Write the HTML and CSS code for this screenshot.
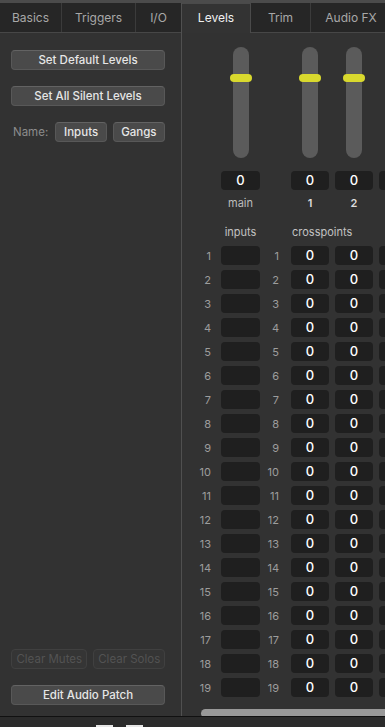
FILE: index.html
```html
<!DOCTYPE html>
<html lang="en">
<head>
    <meta charset="UTF-8">
    <meta name="viewport" content="width=device-width, initial-scale=1.0">
    <title>Levels</title>
    <link rel="stylesheet" href="styles.css">
</head>
<body>
    <div class="topline"></div>
    <div class="window">
        <div class="left">
            <div class="tabs">
                <div class="tab t-basics">Basics</div>
                <div class="tab t-triggers">Triggers</div>
                <div class="tab t-io">I/O</div>
            </div>
            <div class="left-body">
                <div class="btn wide">Set Default Levels</div>
                <div class="btn wide gap">Set All Silent Levels</div>
                <div class="name-row">
                    <span class="name-label">Name:</span>
                    <div class="btn b-inputs">Inputs</div>
                    <div class="btn b-gangs">Gangs</div>
                </div>
                <div class="spacer"></div>
                <div class="clear-row">
                    <div class="btn disabled b-mutes">Clear Mutes</div>
                    <div class="btn disabled b-solos">Clear Solos</div>
                </div>
                <div class="btn wide gap">Edit Audio Patch</div>
            </div>
        </div>
        <div class="right">
            <div class="tabs">
                <div class="tab selected t-levels">Levels</div>
                <div class="tab t-trim">Trim</div>
                <div class="tab t-fx">Audio FX</div>
            </div>
            <div class="row faders">
                <div class="num"></div>
                <div class="col in">
                    <div class="fader"><div class="thumb"></div></div>
                    <div class="val">0</div>
                    <div class="chlabel">main</div>
                </div>
                <div class="num2"></div>
                <div class="col xp">
                    <div class="fader"><div class="thumb"></div></div>
                    <div class="val">0</div>
                    <div class="chlabel bright">1</div>
                </div>
                <div class="col xp">
                    <div class="fader"><div class="thumb"></div></div>
                    <div class="val">0</div>
                    <div class="chlabel bright">2</div>
                </div>
                <div class="col xp">
                    <div class="fader"><div class="thumb"></div></div>
                    <div class="val"></div>
                </div>
            </div>
            <div class="row heads">
                <div class="num"></div>
                <div class="head in">inputs</div>
                <div class="num2"></div>
                <div class="head xhead">crosspoints</div>
            </div>
            <div id="rows" class="rows"></div>
            <div class="hscroll"></div>
        </div>
    </div>
    <div class="footer">
        <div class="sq"></div>
        <div class="sq"></div>
    </div>

    <script>
        let rows = document.getElementById('rows');
        for (let i = 1; i <= 19; i++) {
            rows.innerHTML += `<div class="row">
                <div class="num">${i}</div>
                <div class="box in"></div>
                <div class="num2">${i}</div>
                <div class="box xp">0</div>
                <div class="box xp">0</div>
                <div class="box xp"></div>
            </div>`;
        }
    </script>
</body>
</html>
```

FILE: styles.css
```css
body { margin: 0; width: 385px; height: 727px; overflow: hidden; background: #323232; font-family: Inter, "Liberation Sans", sans-serif; color: #e2e2e2; }
.topline { height: 3px; background: #4b4b4b; }
.window { display: flex; height: 713px; }

.tabs { display: flex; height: 29px; background: #262626; border-bottom: 1px solid #474747; flex-shrink: 0; }
.tab { height: 29px; line-height: 29px; text-align: center; font-size: 12px; color: #a8a8a8; border-right: 1px solid #3b3b3b; flex-shrink: 0; }
.tab.selected { background: #333; color: #f0f0f0; border-right-color: #4a4a4a; height: 30px; box-shadow: inset 0 1px 0 #4a4a4a; }
.t-basics { width: 61px; }
.t-triggers { width: 73px; }
.t-io { flex: 1; border-right: none; }
.t-levels { width: 68px; }
.t-trim { width: 59px; }
.t-fx { width: 80px; }

.left { width: 181px; border-right: 1px solid #505050; display: flex; flex-direction: column; flex-shrink: 0; }
.left-body { flex: 1; display: flex; flex-direction: column; padding: 17px 16px 11px 11px; }
.btn { box-sizing: border-box; height: 20px; line-height: 18px; text-align: center; font-size: 11.5px; font-weight: 500; background: #4a4a4a; border: 1px solid #585858; border-top-color: #636363; border-radius: 4px; color: #e6e6e6; }
.wide { width: 154px; }
.gap { margin-top: 16px; }
.name-row { display: flex; align-items: center; gap: 6px; margin-top: 16px; }
.name-label { font-size: 11.5px; color: #8c8c8c; margin-left: 2px; width: 37px; }
.b-inputs { width: 52px; }
.b-gangs { width: 53px; }
.spacer { flex: 1; }
.clear-row { display: flex; gap: 6px; }
.btn.disabled { background: #353535; border-color: #404040; color: #535353; font-weight: 400; }
.b-mutes { width: 77px; }
.b-solos { width: 72px; }

.right { flex: 1; overflow: hidden; display: flex; flex-direction: column; }
.row { display: flex; align-items: center; padding-left: 8px; flex-shrink: 0; }
.num { width: 21px; margin-right: 10px; text-align: right; font-size: 11px; color: #9d9d9d; flex-shrink: 0; }
.num2 { width: 19px; margin-right: 12px; text-align: right; font-size: 11px; color: #9d9d9d; flex-shrink: 0; }
.in { width: 39px; flex-shrink: 0; }
.xp { width: 38px; margin-right: 6px; flex-shrink: 0; }

.faders { align-items: flex-start; padding-top: 14px; }
.fader { position: relative; width: 16px; height: 111px; margin: 0 auto; background: #5b5b5b; border-radius: 8px; }
.thumb { position: absolute; left: -3px; top: 27px; width: 22px; height: 8px; border-radius: 4px; background: #d9d92e; }
.val { margin-top: 13px; height: 19px; line-height: 19px; border-radius: 4px; background: #1f1f1f; text-align: center; font-size: 13px; font-weight: 500; color: #fff; }
.chlabel { margin-top: 7px; font-size: 11px; line-height: 13px; text-align: center; color: #bcbcbc; }
.chlabel.bright { color: #dedede; font-weight: 600; }

.heads { margin-top: 15px; height: 14px; }
.head { font-size: 11px; color: #c2c2c2; text-align: center; }
.xhead { text-align: left; margin-left: 1px; white-space: nowrap; }

.rows { display: flex; flex-direction: column; gap: 5px; margin-top: 7px; }
.rows .row { height: 19px; }
.box { height: 19px; line-height: 19px; border-radius: 4px; background: #1f1f1f; text-align: center; font-size: 13px; font-weight: 500; color: #fff; }

.hscroll { margin: 12px 0 0 19px; height: 9px; width: 260px; border-radius: 5px; background: #999; flex-shrink: 0; }

.footer { height: 10px; border-top: 1px solid #111; background: #2b2b2b; display: flex; gap: 13px; padding: 8px 0 0 96px; }
.sq { width: 17px; height: 10px; background: #e6e6e6; }
```
